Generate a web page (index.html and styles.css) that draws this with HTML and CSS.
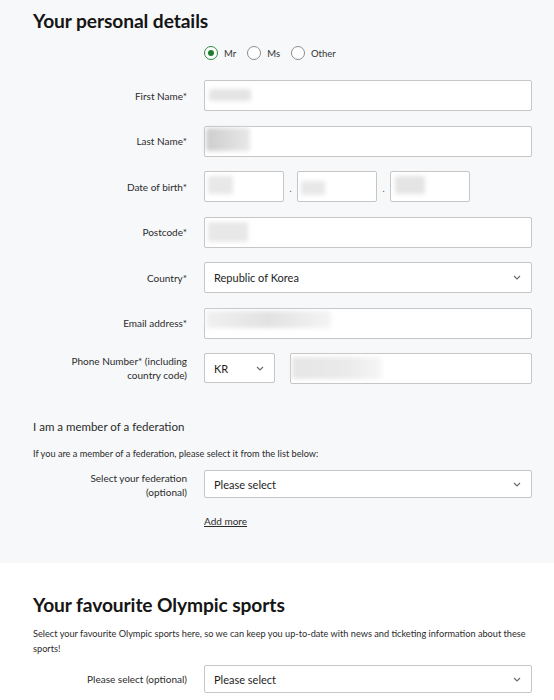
FILE: index.html
```html
<!DOCTYPE html>
<html lang="en">
<head>
<meta charset="utf-8">
<title>Your personal details</title>
<link rel="stylesheet" href="styles.css">
</head>
<body>
<section class="panel panel-grey">
  <h2 class="title">Your personal details</h2>
  <div class="radios">
    <label class="radio"><span class="dot checked"></span><span>Mr</span></label>
    <label class="radio"><span class="dot"></span><span>Ms</span></label>
    <label class="radio"><span class="dot"></span><span>Other</span></label>
  </div>

  <div class="row">
    <div class="label">First Name*</div>
    <div class="field input"><span class="blur b-first"></span></div>
  </div>
  <div class="row">
    <div class="label">Last Name*</div>
    <div class="field input"><span class="blur b-last"></span></div>
  </div>
  <div class="row">
    <div class="label">Date of birth*</div>
    <div class="date">
      <div class="input small"><span class="blur b-d1"></span></div>
      <span class="sep">.</span>
      <div class="input small"><span class="blur b-d2"></span></div>
      <span class="sep">.</span>
      <div class="input small"><span class="blur b-d3"></span></div>
    </div>
  </div>
  <div class="row">
    <div class="label">Postcode*</div>
    <div class="field input"><span class="blur b-post"></span></div>
  </div>
  <div class="row">
    <div class="label">Country*</div>
    <div class="field input select"><span class="val">Republic of Korea</span><svg class="chev" width="8" height="5" viewBox="0 0 8 5"><polyline points="1,1 4,4 7,1" fill="none" stroke="#6b6b6b" stroke-width="1.2"/></svg></div>
  </div>
  <div class="row">
    <div class="label">Email address*</div>
    <div class="field input"><span class="blur b-mail"></span></div>
  </div>
  <div class="row row-top">
    <div class="label multi">Phone Number* (including<br>country code)</div>
    <div class="phone">
      <div class="input select code"><span class="val">KR</span><svg class="chev" width="8" height="5" viewBox="0 0 8 5"><polyline points="1,1 4,4 7,1" fill="none" stroke="#6b6b6b" stroke-width="1.2"/></svg></div>
      <div class="input num"><span class="blur b-phone"></span></div>
    </div>
  </div>

  <h3 class="sub">I am a member of a federation</h3>
  <p class="note">If you are a member of a federation, please select it from the list below:</p>
  <div class="row row-top fed">
    <div class="label multi">Select your federation<br>(optional)</div>
    <div class="field input select sel"><span class="val">Please select</span><svg class="chev" width="8" height="5" viewBox="0 0 8 5"><polyline points="1,1 4,4 7,1" fill="none" stroke="#6b6b6b" stroke-width="1.2"/></svg></div>
  </div>
  <div class="addrow"><a class="add" href="#">Add more</a></div>
</section>

<section class="panel panel-white">
  <h2 class="title">Your favourite Olympic sports</h2>
  <p class="note para">Select your favourite Olympic sports here, so we can keep you up-to-date with news and ticketing information about these sports!</p>
  <div class="row">
    <div class="label">Please select (optional)</div>
    <div class="field input select sel"><span class="val">Please select</span><svg class="chev" width="8" height="5" viewBox="0 0 8 5"><polyline points="1,1 4,4 7,1" fill="none" stroke="#6b6b6b" stroke-width="1.2"/></svg></div>
  </div>
</section>
</body>
</html>
```

FILE: styles.css
```css
* { box-sizing: border-box; }
body {
  margin: 0;
  font-family: Lato, "Open Sans", Arial, sans-serif;
  color: #1d1d1d;
  background: #ffffff;
}
.panel { padding: 0 22px 0 33px; }
.panel-grey { background: #f7f8fa; padding-top: 8px; padding-bottom: 35px; }
.panel-white { background: #ffffff; padding-top: 29px; }

.title {
  margin: 0;
  font-size: 19.2px;
  line-height: 26px;
  font-weight: 700;
  color: #151515;
  letter-spacing: -0.1px;
}
.radios {
  display: flex;
  margin: 12px 0 0 171px;
  height: 14px;
  align-items: center;
  gap: 11px;
}
.radio {
  display: flex;
  align-items: center;
  gap: 6px;
  font-size: 9.5px;
  color: #333;
}
.dot {
  width: 14px;
  height: 14px;
  border-radius: 50%;
  border: 1px solid #8c8c8c;
  background: #fff;
  display: inline-block;
  position: relative;
}
.dot.checked { border: 1.5px solid #2b8a3e; }
.dot.checked::after {
  content: "";
  position: absolute;
  left: 2.5px; top: 2.5px;
  width: 6px; height: 6px;
  border-radius: 50%;
  background: #1e7b32;
}

.row {
  display: flex;
  align-items: center;
  gap: 17px;
  margin-top: 14.5px;
}
.radios + .row { margin-top: 20px; }
.row-top { align-items: flex-start; }
.label {
  width: 154px;
  flex: none;
  text-align: right;
  font-size: 10px;
  color: #2b2b2b;
}
.label.multi { line-height: 14px; padding-top: 1px; }
.field { flex: 1; }
.input {
  height: 31px;
  background: #fff;
  border: 1px solid #c6c6c6;
  border-radius: 2px;
  position: relative;
  display: flex;
  align-items: center;
  padding-left: 9px;
}
.select { justify-content: space-between; padding-right: 10px; }
.val { font-size: 11px; color: #1d1d1d; }
.chev { flex: none; }

.date { display: flex; align-items: center; }
.input.small { width: 80px; }
.sep { width: 13px; text-align: center; font-size: 9px; color: #555; padding-top: 4px; }

.phone { flex: 1; display: flex; gap: 15px; }
.code { width: 71px; height: 30px; }
.num { flex: 1; height: 31px; }

.blur {
  position: absolute;
  background: #dcdcdc;
  filter: blur(2px);
  border-radius: 2px;
}
.b-first { left: 4px; top: 8px; width: 42px; height: 12px; background: #e4e4e4; }
.b-last { left: 1px; top: 1px; width: 44px; height: 23px; background: linear-gradient(90deg, #cdcdcd, #e8e8e8); }
.b-d1 { left: 3px; top: 4px; width: 25px; height: 18px; background: #e8e8e8; }
.b-d2 { left: 3px; top: 9px; width: 24px; height: 14px; background: #e8e8e8; }
.b-d3 { left: 4px; top: 4px; width: 30px; height: 18px; background: #e4e4e4; }
.b-post { left: 3px; top: 4px; width: 40px; height: 20px; background: #e8e8e8; }
.b-mail { left: 1px; top: 2px; width: 125px; height: 17px; background: linear-gradient(90deg, #f0f0f0, #e2e2e2 50%, #f4f4f4); }
.b-phone { left: 1px; top: 3px; width: 90px; height: 22px; background: linear-gradient(90deg, #e6e6e6, #eaeaea 60%, #f6f6f6); }

.sub {
  margin: 35px 0 0;
  font-size: 11.5px;
  line-height: 16px;
  font-weight: 400;
  color: #2b2b2b;
}
.note {
  margin: 11px 0 0;
  font-size: 9.2px;
  line-height: 15px;
  color: #2b2b2b;
}
.fed { margin-top: 9px; }
.sel { height: 28px; }
.sel .val { font-size: 11px; }
.addrow { padding-left: 171px; margin-top: 13px; line-height: 14px; }
.add { font-size: 10px; color: #2b2b2b; text-decoration: underline; }

.para { margin-top: 8px; padding-right: 4px; }
.panel-white .row { margin-top: 9px; }
```
